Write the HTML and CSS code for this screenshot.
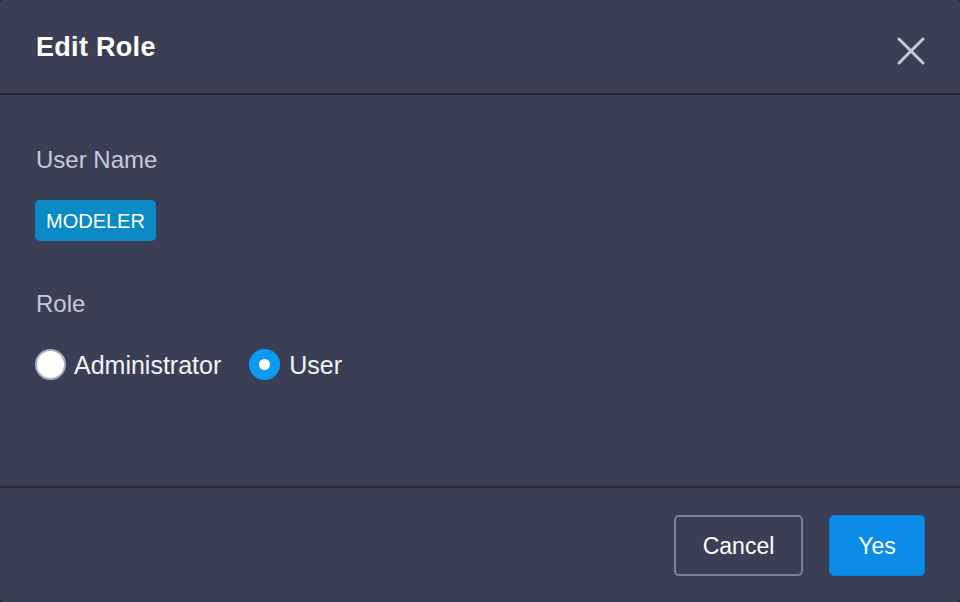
FILE: index.html
```html
<!DOCTYPE html>
<html lang="en">
<head>
<meta charset="utf-8">
<title>Edit Role</title>
<link rel="stylesheet" href="styles.css">
</head>
<body>
<div class="dialog">
  <header class="dialog-header">
    <h1 class="dialog-title">Edit Role</h1>
    <button class="close-btn" aria-label="Close">
      <svg width="28" height="28" viewBox="0 0 28 28"><path d="M2 2 L26 26 M26 2 L2 26" stroke="#c3cad8" stroke-width="3" stroke-linecap="round" fill="none"/></svg>
    </button>
  </header>
  <main class="dialog-body">
    <div class="field-label">User Name</div>
    <span class="tag">MODELER</span>
    <div class="field-label role-label">Role</div>
    <div class="radio-row">
      <label class="radio"><span class="radio-circle"></span><span class="radio-text">Administrator</span></label>
      <label class="radio checked"><span class="radio-circle"><span class="radio-dot"></span></span><span class="radio-text">User</span></label>
    </div>
  </main>
  <footer class="dialog-footer">
    <button class="btn btn-cancel">Cancel</button>
    <button class="btn btn-yes">Yes</button>
  </footer>
</div>
</body>
</html>
```
FILE: styles.css
```css
html, body {
  margin: 0;
  padding: 0;
  background: #262935;
}
body {
  font-family: "Liberation Sans", Arial, sans-serif;
  width: 960px;
  height: 602px;
  overflow: hidden;
}
.dialog {
  width: 960px;
  height: 602px;
  background: #3a3f55;
  border-radius: 4px;
  display: flex;
  flex-direction: column;
}
.dialog-header {
  height: 95px;
  box-sizing: border-box;
  border-bottom: 2px solid #272a37;
  display: flex;
  align-items: flex-start;
  justify-content: space-between;
  padding: 0 35px 0 36px;
  flex: none;
}
.dialog-title {
  margin: 0;
  padding-top: 29px;
  font-size: 27px;
  line-height: 36px;
  font-weight: bold;
  color: #ffffff;
  letter-spacing: 0.3px;
}
.close-btn {
  margin-top: 37px;
  padding: 0;
  border: none;
  background: none;
  width: 28px;
  height: 28px;
  display: block;
}
.close-btn svg { display: block; }
.dialog-body {
  flex: 1;
  padding: 51px 0 0 36px;
  display: flex;
  flex-direction: column;
  align-items: flex-start;
}
.field-label {
  font-size: 24px;
  line-height: 28px;
  color: #c6c9da;
}
.tag {
  margin-top: 26px;
  margin-left: -1px;
  height: 41px;
  box-sizing: border-box;
  padding: 2px 11px 0 11px;
  background: #0a8ac6;
  border-radius: 5px;
  color: #ffffff;
  font-size: 20px;
  line-height: 39px;
}
.role-label {
  margin-top: 49px;
}
.radio-row {
  margin-top: 31px;
  margin-left: -1px;
  display: flex;
  align-items: center;
  gap: 28px;
}
.radio {
  display: flex;
  align-items: center;
  gap: 8px;
}
.radio-circle {
  width: 31px;
  height: 31px;
  box-sizing: border-box;
  border-radius: 50%;
  background: #ffffff;
  border: 2px solid #a9b0c0;
  display: flex;
  align-items: center;
  justify-content: center;
}
.radio.checked .radio-circle {
  background: #0b9cf2;
  border-color: #0b9cf2;
}
.radio-dot {
  width: 11px;
  height: 11px;
  border-radius: 50%;
  background: #ffffff;
}
.radio-text {
  font-size: 25px;
  line-height: 30px;
  color: #f2f3f7;
}
.radio.checked .radio-text { margin-left: 1px; }
.dialog-footer {
  flex: none;
  height: 116px;
  box-sizing: border-box;
  border-top: 2px solid #272a37;
  padding: 27px 35px 0 0;
  display: flex;
  justify-content: flex-end;
  align-items: flex-start;
  gap: 26px;
}
.btn {
  height: 61px;
  box-sizing: border-box;
  border-radius: 5px;
  font-family: "Liberation Sans", Arial, sans-serif;
  font-size: 23px;
  color: #ffffff;
  padding: 2px 0 0 0;
}
.btn-cancel {
  width: 129px;
  background: transparent;
  border: 2px solid #7b80a6;
}
.btn-yes {
  width: 96px;
  background: #0a8ce8;
  border: 1px solid #0a7dd4;
}
```
